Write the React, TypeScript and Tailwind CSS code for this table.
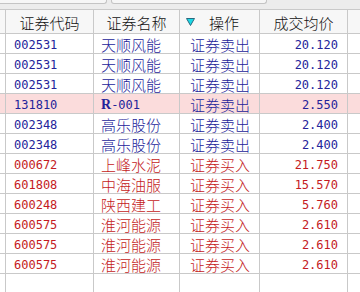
import React from 'react';

type Trade = { code: string; name: string; op: string; price: string; buy: boolean; hl?: boolean };

const trades: Trade[] = [
  { code: '002531', name: '天顺风能', op: '证券卖出', price: '20.120', buy: false },
  { code: '002531', name: '天顺风能', op: '证券卖出', price: '20.120', buy: false },
  { code: '002531', name: '天顺风能', op: '证券卖出', price: '20.120', buy: false },
  { code: '131810', name: 'R-001', op: '证券卖出', price: '2.550', buy: false, hl: true },
  { code: '002348', name: '高乐股份', op: '证券卖出', price: '2.400', buy: false },
  { code: '002348', name: '高乐股份', op: '证券卖出', price: '2.400', buy: false },
  { code: '000672', name: '上峰水泥', op: '证券买入', price: '21.750', buy: true },
  { code: '601808', name: '中海油服', op: '证券买入', price: '15.570', buy: true },
  { code: '600248', name: '陕西建工', op: '证券买入', price: '5.760', buy: true },
  { code: '600575', name: '淮河能源', op: '证券买入', price: '2.610', buy: true },
  { code: '600575', name: '淮河能源', op: '证券买入', price: '2.610', buy: true },
  { code: '600575', name: '淮河能源', op: '证券买入', price: '2.610', buy: true },
];

const grid = 'grid grid-cols-[6px_88px_86px_80px_88px_1fr]';
const cell = 'border-r border-[#c9c9c9] h-full';
const cjk = "font-['Noto_Sans_CJK_SC',sans-serif] font-light";
const mono = "font-['DejaVu_Sans_Mono',monospace]";

export default function App() {
  return (
    <div className="w-[360px] h-[292px] overflow-hidden bg-white select-none">
      {/* toolbar remnant */}
      <div className="h-[9px] bg-[#ececec] flex items-start gap-[4px]">
        <div className="w-[107px] h-[4px] bg-[#f6f6f6] border-b border-r border-[#c4c4c4] rounded-br-[3px]" />
        <div className="w-[156px] h-[4px] bg-[#f6f6f6] border-b border-x border-[#c4c4c4] rounded-b-[3px]" />
      </div>

      {/* header */}
      <div className={`${grid} h-[25px] bg-[#f7f7f7] border-y border-[#c9c9c9] text-[15px] leading-none text-[#111] ${cjk}`}>
        <div className={cell} />
        <div className={`${cell} flex items-center justify-center pt-[1px]`}>证券代码</div>
        <div className={`${cell} flex items-center justify-center pt-[1px]`}>证券名称</div>
        <div className={`${cell} flex items-center pl-[6px] pt-[1px]`}>
          <svg width="9" height="8" viewBox="0 0 9 8" className="mr-[14px]">
            <polygon points="0.5,0.5 8.5,0.5 4.5,7.5" fill="#19d9e6" stroke="#2a6a80" strokeWidth="1" />
          </svg>
          操作
        </div>
        <div className={`${cell} flex items-center justify-center pt-[1px]`}>成交均价</div>
        <div />
      </div>

      {/* rows */}
      {trades.map((t, i) => (
        <div
          key={i}
          className={`${grid} h-[20px] border-b border-[#c9c9c9] ${t.hl ? 'bg-[#fbdcdc]' : 'bg-white'} ${t.buy ? 'text-[#c41a22]' : 'text-[#23239a]'}`}
        >
          <div className={cell} />
          <div className={`${cell} ${mono} text-[12px] leading-none pl-[8px] flex items-center pt-[2px]`}>{t.code}</div>
          <div className={`${cell} ${cjk} text-[15px] leading-none pl-[7px] flex items-center pt-[2px]`}>
            {t.name === 'R-001' ? (
              <span className={`${mono} text-[12px] font-normal`}>
                <span className="font-['Liberation_Serif',serif] font-bold text-[14px]">R</span>-001
              </span>
            ) : (
              t.name
            )}
          </div>
          <div className={`${cell} ${cjk} text-[15px] leading-none pl-[10px] flex items-center pt-[2px]`}>{t.op}</div>
          <div className={`${cell} ${mono} text-[12px] leading-none pr-[9px] flex items-center justify-end pt-[2px]`}>{t.price}</div>
          <div />
        </div>
      ))}

      <div className={`${grid} h-[30px]`}>
        <div className={cell} />
        <div className={cell} />
        <div className={cell} />
        <div className={cell} />
        <div className={cell} />
        <div />
      </div>
    </div>
  );
}
